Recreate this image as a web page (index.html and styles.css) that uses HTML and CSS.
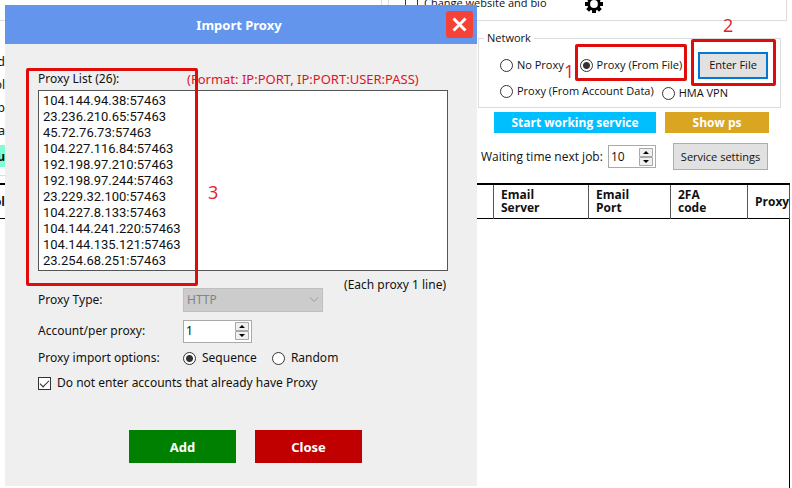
FILE: index.html
```html
<!DOCTYPE html>
<html lang="en">
<head>
<meta charset="utf-8">
<title>Import Proxy</title>
<link rel="stylesheet" href="styles.css">
</head>
<body>
<main class="app">
  <div class="top">
    <section class="left">
      <div class="left-group"></div>
      <ul class="fields">
        <li><span class="tail">d</span></li>
        <li><span class="tail">ol</span></li>
        <li><span class="tail">p</span></li>
        <li><span class="tail">a</span></li>
        <li class="mark"><span class="tail">u</span></li>
      </ul>
    </section>
    <section class="right">
      <div class="profile-group">
        <label class="check"><input type="checkbox"><span>Change website and bio</span></label>
        <svg class="gear" viewBox="0 0 18 18" aria-hidden="true"><g stroke="#000" stroke-width="4"><path d="M9 0V18M0 9H18M2.6 2.6L15.4 15.4M15.4 2.6L2.6 15.4"/></g><circle cx="9" cy="9" r="6.6"/><circle cx="9" cy="9" r="3.9" fill="#fff"/></svg>
      </div>
      <fieldset class="network">
        <legend>Network</legend>
        <div class="net-row">
          <label class="radio"><input type="radio" name="net"><span>No Proxy</span></label>
          <label class="radio"><input type="radio" name="net" checked><span>Proxy (From File)</span></label>
          <button class="btn focused" type="button">Enter File</button>
        </div>
        <div class="net-row second">
          <label class="radio"><input type="radio" name="net"><span>Proxy (From Account Data)</span></label>
          <label class="radio small"><input type="radio" name="net"><span>HMA VPN</span></label>
        </div>
      </fieldset>
      <div class="actions">
        <button class="solid cyan" type="button">Start working service</button>
        <button class="solid gold" type="button">Show ps</button>
      </div>
      <div class="service">
        <label for="wait">Waiting time next job:</label>
        <span class="spin narrow">
          <input id="wait" type="number" value="10">
          <svg viewBox="0 0 14 18" aria-hidden="true"><path d="M.5.5h13v8H.5zM.5 9.5h13v8H.5z" fill="#f0f0f0" stroke="#a8a8a8"/><path d="M4 6h6L7 3zM4 12h6l-3 3z"/></svg>
        </span>
        <button class="btn" type="button">Service settings</button>
      </div>
    </section>
  </div>
  <table class="accounts">
    <colgroup><col><col class="c-server"><col class="c-port"><col class="c-code"><col class="c-proxy"></colgroup>
    <thead><tr><th class="first"><span class="tail">ol</span></th><th>Email Server</th><th>Email Port</th><th>2FA code</th><th>Proxy</th></tr></thead>
  </table>
  <div class="rows"></div>
</main>

<section class="dialog" role="dialog" aria-labelledby="title">
  <header class="dialog-head">
    <h1 id="title">Import Proxy</h1>
    <button class="close-x" type="button" aria-label="Close dialog"><svg viewBox="0 0 27 27" aria-hidden="true"><path d="M7.5 7.5l12 12M19.5 7.5l-12 12" stroke="#fff" stroke-width="3"/></svg></button>
  </header>
  <form class="dialog-body">
    <div class="list-head"><label for="list">Proxy List (26):</label><span class="format">(Format: IP:PORT, IP:PORT:USER:PASS)</span></div>
    <textarea id="list" rows="11">104.144.94.38:57463
23.236.210.65:57463
45.72.76.73:57463
104.227.116.84:57463
192.198.97.210:57463
192.198.97.244:57463
23.229.32.100:57463
104.227.8.133:57463
104.144.241.220:57463
104.144.135.121:57463
23.254.68.251:57463</textarea>
    <p class="hint">(Each proxy 1 line)</p>
    <div class="form-row">
      <label for="type">Proxy Type:</label>
      <span class="drop"><select id="type" disabled><option>HTTP</option></select><svg viewBox="0 0 10 6" aria-hidden="true"><path d="M1 .5l4 4 4-4" fill="none" stroke="#9a9a9a"/></svg></span>
    </div>
    <div class="form-row">
      <label for="per">Account/per proxy:</label>
      <span class="spin">
        <input id="per" type="number" value="1">
        <svg viewBox="0 0 14 18" aria-hidden="true"><path d="M.5.5h13v8H.5zM.5 9.5h13v8H.5z" fill="#f0f0f0" stroke="#a8a8a8"/><path d="M4 6h6L7 3zM4 12h6l-3 3z"/></svg>
      </span>
    </div>
    <div class="form-row options">
      <span>Proxy import options:</span>
      <div class="choices">
        <label class="radio"><input type="radio" name="order" checked><span>Sequence</span></label>
        <label class="radio"><input type="radio" name="order"><span>Random</span></label>
      </div>
    </div>
    <label class="check"><input type="checkbox" checked><span>Do not enter accounts that already have Proxy</span></label>
    <div class="buttons">
      <button class="solid green" type="button">Add</button>
      <button class="solid red" type="button">Close</button>
    </div>
  </form>
</section>

<div class="frame frame-file"></div>
<div class="frame frame-enter"></div>
<div class="frame frame-list"></div>
<span class="step step-1">1</span>
<span class="step step-2">2</span>
<span class="step step-3">3</span>
</body>
</html>
```
FILE: styles.css
```css
* { box-sizing: border-box; }
body {
  margin: 0;
  position: relative;
  overflow: hidden;
  background: #fff;
  color: #111;
  font: 12px/16px "Noto Sans", sans-serif;
}
button, input, select, textarea { font: inherit; color: inherit; margin: 0; }

/* main window */
.app { display: flex; flex-direction: column; min-height: 100vh; padding-right: 2px; }
.top { display: grid; grid-template-columns: 382px 1fr; column-gap: 6px; height: 183px; }
.left-group { height: 21px; border: 1px solid #dcdcdc; border-width: 0 1px 1px 0; }
.fields { list-style: none; margin: 29px 0 0; padding: 0 0 8px; border-bottom: 1px solid #dcdcdc; }
.fields li { height: 23px; line-height: 23px; }
.fields .mark { width: 60px; height: 22px; margin-top: 3px; background: #7fffd4; font-weight: bold; }
.tail { display: flex; justify-content: flex-end; width: 5px; }
.right { font-family: "Open Sans", sans-serif; font-size: 11px; }
.profile-group { display: flex; gap: 38px; height: 21px; margin-right: 3px; padding-left: 16px; border: 1px solid #dcdcdc; border-width: 0 1px 1px 1px; }
.profile-group .check { height: 16px; margin-top: -5px; }
.gear { width: 18px; height: 18px; margin-top: -5px; }
.network { margin: 9px 9px 0 90px; padding: 0 12px 0 21px; height: 78px; border: 1px solid #dcdcdc; }
.network legend { margin-left: -16px; padding: 0 3px; }
.net-row { display: flex; align-items: center; justify-content: space-between; height: 28px; margin-top: 5px; }
.net-row.second { height: 22px; margin-top: 1px; justify-content: flex-start; gap: 8px; }
.network .radio { gap: 4px; }
.small { padding-top: 4px; }
.btn { height: 27px; padding: 0 6px; border: 1px solid #adadad; background: #e1e1e1; white-space: nowrap; }
.btn.focused { width: 70px; border: 2px solid #0078d7; padding: 0; }
.solid { border: 0; padding: 0; color: #fff; font-weight: bold; }
.actions { display: flex; gap: 9px; margin: 4px 21px 0 106px; font-size: 12px; }
.actions .solid { height: 21px; flex: 104 1 0; }
.actions .cyan { flex-grow: 162; background: #00bfff; }
.gold { background: #daa520; }
.service { display: flex; align-items: center; gap: 17px; margin: 10px 22px 0 93px; white-space: nowrap; }
.service label { flex: 1; margin-right: -17px; font-size: 12px; }
.service .spin { font-size: 12px; }
.service .btn { width: 95px; }

.accounts { width: 100%; table-layout: fixed; border-collapse: collapse; border: 1px solid #000; border-width: 2px 1px 1px 0; }
.c-server { width: 95px; }
.c-port { width: 82px; }
.c-code { width: 77px; }
.c-proxy { width: 42px; }
.accounts th { height: 34px; padding: 0 43px 0 7px; border-right: 1px solid #555; text-align: left; font-family: "Open Sans", sans-serif; font-size: 12px; line-height: 13px; }
.accounts th:nth-child(n+3) { padding-right: 24px; }
.accounts .first, .accounts th:last-child { padding-right: 0; }
.accounts .first { padding-left: 0; }
.rows { flex: 1; border-right: 1px solid #000; }

/* shared controls */
.check, .radio { display: flex; align-items: center; gap: 6px; white-space: nowrap; }
.check input, .radio input { appearance: none; flex: none; width: 13px; height: 13px; border: 1px solid #333; background: #fff; }
.radio input { border-radius: 50%; }
.radio input:checked { background: radial-gradient(circle, #333 3px, #fff 4px); }
.check input:checked { position: relative; }
.check input:checked::after { content: ""; position: absolute; left: 1px; top: 2px; width: 8px; height: 4px; border: 1px solid #222; border-width: 0 0 1px 1px; transform: rotate(-45deg); }
.spin { display: flex; align-items: center; width: 69px; height: 23px; padding: 0 2px; border: 1px solid #aaa; background: #fff; }
.spin.narrow { width: 48px; }
.spin input { appearance: textfield; flex: 1; min-width: 0; padding: 0; border: 0; background: none; }
.spin input::-webkit-inner-spin-button { display: none; }
.spin svg { width: 14px; height: 18px; }

/* import dialog */
.dialog { position: absolute; left: 5px; top: 5px; width: 472px; padding-bottom: 23px; background: #efefef; }
.dialog-head { display: flex; align-items: center; height: 39px; padding-right: 4px; background: #6495ed; color: #fff; }
.dialog-head h1 { flex: 1; margin: 0; padding-left: 27px; text-align: center; font-size: 13px; line-height: 18px; }
.close-x { width: 27px; height: 27px; padding: 0; border: 0; border-radius: 3px; background: #f44336; }
.close-x svg { display: block; }
.dialog-body { padding: 27px 29px 0 33px; }
.list-head { display: grid; grid-template-columns: 149px 1fr; height: 19px; }
.format { color: #dc1428; font-size: 13px; white-space: nowrap; }
textarea { display: block; width: 100%; height: 181px; padding: 2px 4px; border: 1px solid #555; border-radius: 0; background: #fff; resize: none; overflow: hidden; }
.dialog textarea { font: 13px/16px Roboto, sans-serif; }
.hint { margin: 6px 2px 0; text-align: right; height: 11px; }
.form-row { display: grid; grid-template-columns: 145px 1fr; align-items: center; height: 24px; margin-bottom: 7px; }
.drop { position: relative; width: 140px; }
.drop select { display: block; appearance: none; width: 100%; height: 24px; padding: 0 3px; border: 1px solid #bfbfbf; border-radius: 0; background: #ccc; color: #838383; opacity: 1; }
.drop svg { position: absolute; right: 4px; top: 9px; width: 10px; height: 6px; }
.form-row.options { height: 16px; margin-bottom: 9px; }
.choices { display: flex; gap: 15px; }
.buttons { display: flex; gap: 19px; margin: 39px 0 0 91px; }
.buttons .solid { width: 107px; height: 33px; font-size: 13px; }
.green { background: #008000; }
.red { background: #c00000; }

/* tutorial marks over the window */
.frame { position: absolute; border: 3px solid #e00b0b; border-radius: 2px; pointer-events: none; }
.frame-file { left: 575px; top: 44px; width: 112px; height: 37px; }
.frame-enter { left: 691px; top: 39px; width: 85px; height: 47px; }
.frame-list { left: 26px; top: 68px; width: 172px; height: 218px; }
.step { position: absolute; color: #e0202c; font: 18px/20px "Open Sans", sans-serif; }
.step-1 { left: 564px; top: 61px; }
.step-2 { left: 723px; top: 15px; }
.step-3 { left: 208px; top: 182px; }
```
